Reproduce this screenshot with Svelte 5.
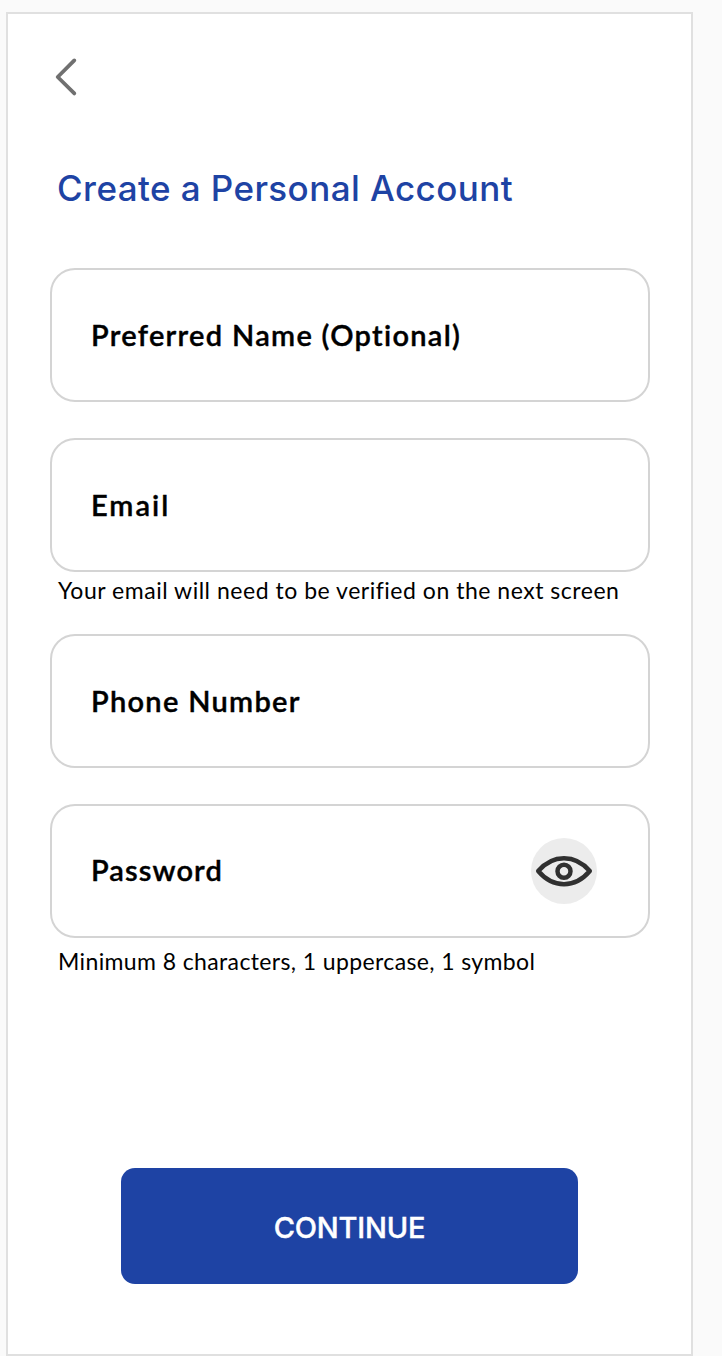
<script>
  const fields = [
    { label: 'Preferred Name (Optional)', key: 'name' },
    { label: 'Email', key: 'email', hint: 'Your email will need to be verified on the next screen' },
    { label: 'Phone Number', key: 'phone' },
    { label: 'Password', key: 'password', hint: 'Minimum 8 characters, 1 uppercase, 1 symbol', reveal: true }
  ];
</script>

<main class="screen">
  <button class="back" aria-label="Back">
    <svg width="24" height="40" viewBox="0 0 24 40">
      <path d="M20.300 3.4 3.700 20 20.300 36.400" />
    </svg>
  </button>
  <h1>Create a Personal Account</h1>
  <form>
    {#each fields as field}
      <div class="group">
        <div class="field">
          <span class="label {field.key}">{field.label}</span>
          {#if field.reveal}
            <button class="reveal" type="button" aria-label="Show password">
              <svg width="66" height="66" viewBox="0 0 66 66">
                <path d="M7.2 33C22 16 44 16 58.800 33C44 50.500 22 50.500 7.200 33Z" />
                <circle cx="33" cy="33.300" r="6.500" />
              </svg>
            </button>
          {/if}
        </div>
        {#if field.hint}
          <p class="hint {field.key}">{field.hint}</p>
        {/if}
      </div>
    {/each}
    <button class="continue" type="button">CONTINUE</button>
  </form>
</main>

<style>
  :global(body) {
    margin: 0;
    background: #fafafa;
  }
  .screen {
    box-sizing: border-box;
    width: 687px;
    height: 1344px;
    margin: 12px 0 0 6px;
    padding: 43px 41px 0 42px;
    border: 2px solid #e0e0e0;
    background: #fff;
  }
  button {
    border: 0;
    padding: 0;
    background: none;
  }
  .back {
    display: block;
    height: 40px;
    margin-left: 4px;
  }
  svg {
    display: block;
    fill: none;
    stroke-linecap: round;
    stroke-linejoin: round;
  }
  .back svg {
    stroke: #707070;
    stroke-width: 3.8;
  }
  h1 {
    margin: 71px 0 60px 7px;
    font: 500 35px/40px Inter, sans-serif;
    letter-spacing: 0.42px;
    color: #1e43a4;
    white-space: nowrap;
  }
  form {
    display: flex;
    flex-direction: column;
  }
  .group {
    height: 170px;
  }
  .group:nth-child(2) {
    height: 196px;
  }
  .field {
    box-sizing: border-box;
    display: flex;
    align-items: center;
    justify-content: space-between;
    width: 600px;
    height: 134px;
    padding: 0 51px 0 39px;
    border: 2px solid #d4d4d4;
    border-radius: 25px;
  }
  .label {
    font: 600 29px/40px Lato, sans-serif;
    letter-spacing: 1.3px;
    font-variant-ligatures: none;
    -webkit-text-stroke: 0.4px #000;
    color: #000;
    white-space: nowrap;
  }
  .label.email {
    letter-spacing: 2px;
  }
  .label.password {
    letter-spacing: 1.1px;
    padding-bottom: 2px;
  }
  .hint {
    margin: 3px 0 0 8px;
    font: 400 23px/30px Lato, sans-serif;
    letter-spacing: 0.52px;
    font-variant-ligatures: none;
    color: #000;
    white-space: nowrap;
  }
  .hint.password {
    margin-top: 8px;
    letter-spacing: 0.38px;
  }
  .reveal {
    width: 66px;
    height: 66px;
    border-radius: 50%;
    background: #ececec;
  }
  .reveal svg {
    stroke: #303030;
    stroke-width: 4.5;
  }
  .continue {
    width: 457px;
    height: 116px;
    margin: 194px 0 0 71px;
    padding-top: 4px;
    border-radius: 14px;
    background: #1e43a4;
    font: 500 29px/40px Inter, sans-serif;
    letter-spacing: -0.2px;
    -webkit-text-stroke: 0.4px #fff;
    color: #fff;
  }
</style>
